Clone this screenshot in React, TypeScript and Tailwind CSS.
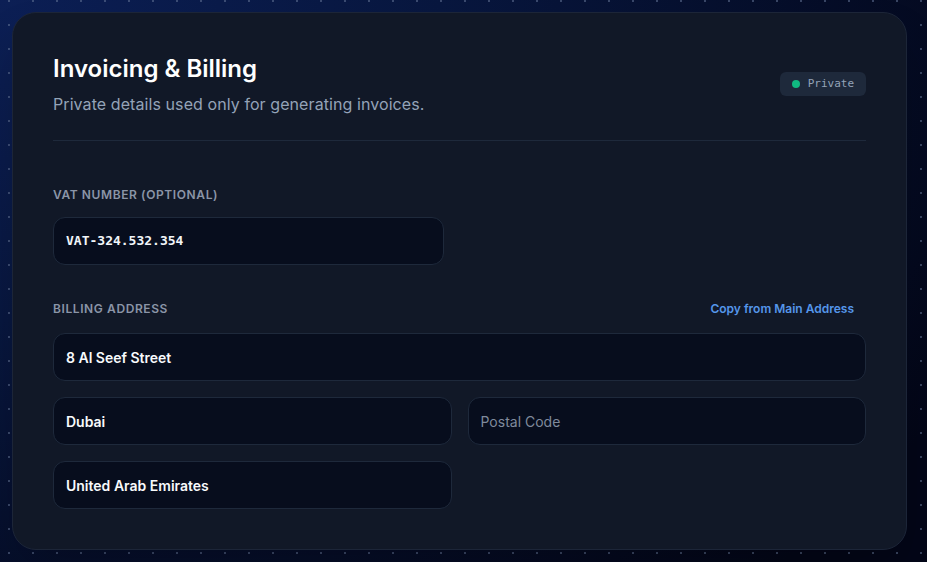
import React from "react";

const inputBase =
  "h-12 rounded-xl border border-[#1e293b] bg-[#070d1d] px-3 flex items-center text-[14px]";

export default function App() {
  return (
    <div
      className="h-[562px] w-full pl-3 pt-3 pb-3 pr-5 overflow-hidden"
      style={{
        backgroundColor: "#030617",
        backgroundImage:
          "radial-gradient(circle, rgba(100,116,150,0.55) 1px, transparent 1.2px), radial-gradient(ellipse 1100px 800px at 0% 0%, #0c1f55 0%, #08173f 40%, #030617 100%)",
        backgroundSize: "24px 24px, 100% 100%",
        backgroundPosition: "-3px -11px, 0 0",
      }}
    >
      <div
        className="h-full w-full rounded-[24px] border border-[#1c2538] bg-[#111827] px-10 pt-10 pb-10 shadow-2xl"
        style={{ fontFamily: "Inter, 'Noto Sans', sans-serif" }}
      >
        <div className="flex items-center justify-between border-b border-[#1e293b] pb-6">
          <div>
            <h1 className="text-[24px] font-semibold leading-8 text-white">
              Invoicing &amp; Billing
            </h1>
            <p className="mt-[7px] text-[16px] leading-6 tracking-[0.005em] text-[#94a3b8]">
              Private details used only for generating invoices.
            </p>
          </div>
          <div className="flex items-center gap-2 rounded-md bg-[#1e293b] px-3 py-1 mt-[-2px]">
            <span className="h-2 w-2 rounded-full bg-[#10b981]" />
            <span
              className="text-[11px] leading-4 text-[#94a3b8]"
              style={{ fontFamily: "'DejaVu Sans Mono', monospace" }}
            >
              Private
            </span>
          </div>
        </div>

        <div className="mt-[46px]">
          <div className="text-[12px] font-semibold uppercase tracking-wider leading-4 text-[#8b95a7]">
            VAT Number (Optional)
          </div>
          <div className={`mt-[14px] w-[391px] ${inputBase}`}>
            <span
              className="font-bold text-[13px] text-[#f1f5f9]"
              style={{ fontFamily: "'DejaVu Sans Mono', monospace" }}
            >
              VAT-324.532.354
            </span>
          </div>
        </div>

        <div className="mt-[36px]">
          <div className="flex items-center justify-between">
            <div className="text-[12px] font-semibold uppercase tracking-wider leading-4 text-[#8b95a7]">
              Billing Address
            </div>
            <button className="px-3 text-[12px] font-semibold leading-4 text-[#5596ea]">
              Copy from Main Address
            </button>
          </div>
          <div className="mt-[16px] flex flex-col gap-4">
            <div className={`w-full ${inputBase}`}>
              <span className="font-semibold text-[#f8fafc]">8 Al Seef Street</span>
            </div>
            <div className="grid grid-cols-2 gap-4">
              <div className={inputBase}>
                <span className="font-semibold text-[#f8fafc]">Dubai</span>
              </div>
              <div className={inputBase}>
                <span className="text-[#7f8a9c]">Postal Code</span>
              </div>
            </div>
            <div className="grid grid-cols-2 gap-4">
              <div className={inputBase}>
                <span className="font-semibold text-[#f8fafc]">United Arab Emirates</span>
              </div>
            </div>
          </div>
        </div>
      </div>
    </div>
  );
}
